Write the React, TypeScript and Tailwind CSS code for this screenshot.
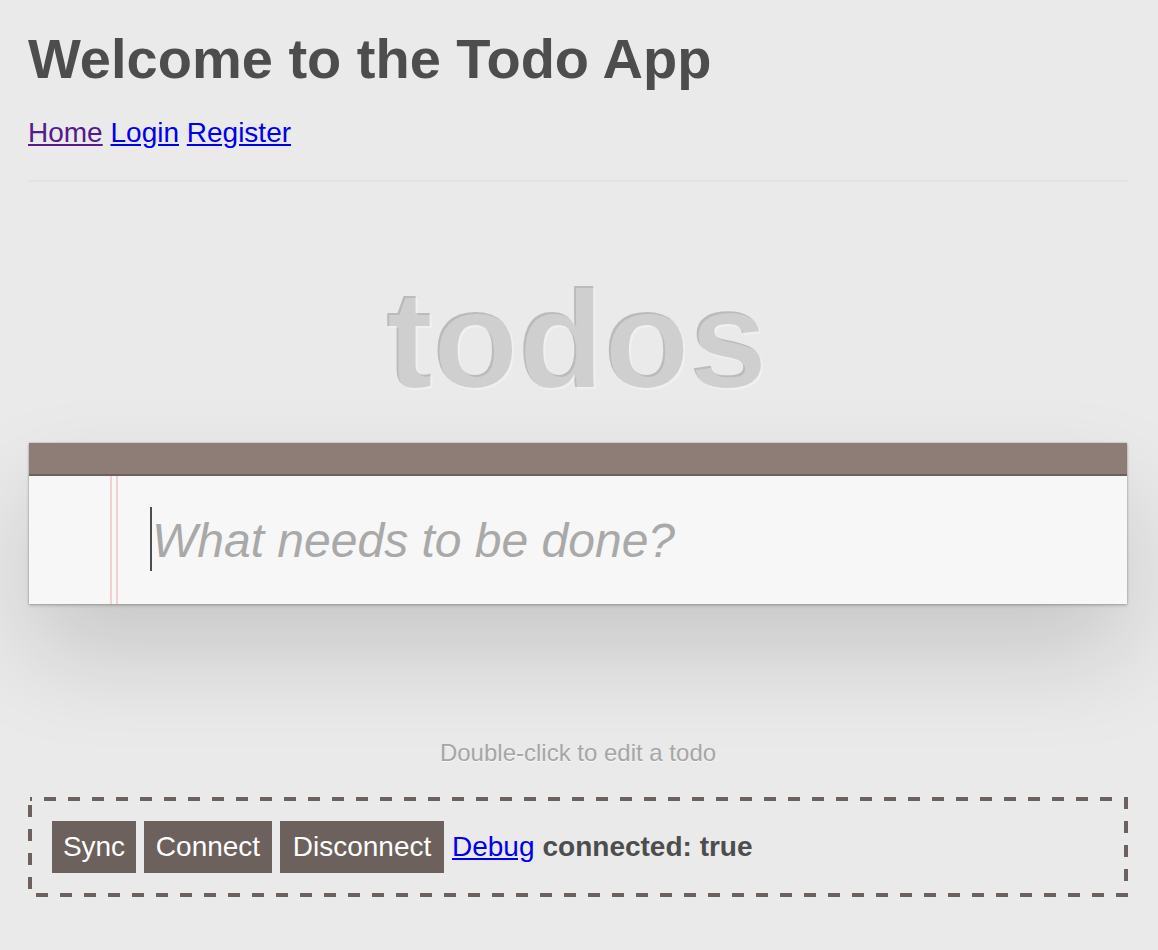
import React from "react";

export default function App() {
  return (
    <div className="min-h-[950px] bg-[#eaeaea] font-['Liberation_Sans',Arial,sans-serif] text-[#4d4d4d] pl-[28px] pt-[27px]">
      <div className="w-[1100px]">
        <h1 className="m-0 text-[56px] leading-[64px] font-bold">Welcome to the Todo App</h1>
        <nav className="mt-[26px] text-[28px] leading-[32px]">
          <a href="#" className="text-[#551a8b] underline">Home</a>{" "}
          <a href="#" className="text-[#0000ee] underline">Login</a>{" "}
          <a href="#" className="text-[#0000ee] underline">Register</a>
        </nav>
        <div className="mt-[31px] h-[2px] bg-[#e3e3e3]" />

        <div
          className="mt-[89px] text-center text-[140px] leading-[140px] font-bold text-[rgba(255,255,255,0.3)]"
          style={{ textShadow: "-2px -2px rgba(0,0,0,0.2)" }}
        >
          todos
        </div>

        <section className="mt-[32px] ml-[1px] w-[1098px] bg-[#f7f7f7] shadow-[0_0_2px_rgba(0,0,0,0.3),0_2px_3px_rgba(0,0,0,0.15),0_50px_100px_rgba(0,0,0,0.15)]">
          <div className="h-[33px] bg-[#8d7d76] border-b-2 border-[#6c615c]" />
          <div className="relative h-[128px]">
            <div className="absolute left-[81px] top-0 h-full w-[8px] border-l-2 border-r-2 border-[#f1d0d0]" />
            <div className="absolute left-[121px] top-[31px] h-[64px] w-[2px] bg-[#4d4d4d]" />
            <input
              className="block h-[128px] w-full bg-transparent pl-[123px] pr-8 text-[48px] outline-none border-0 text-[#4d4d4d] placeholder:text-[#a9a9a9] placeholder:italic"
              placeholder="What needs to be done?"
            />
          </div>
        </section>

        <p
          className="mt-[135px] text-center text-[24px] leading-[28px] text-[#a6a6a6]"
          style={{ textShadow: "0 1px rgba(255,255,255,0.7)" }}
        >
          Double-click to edit a todo
        </p>

        <div className="relative mt-[30px] h-[100px] p-[4px] pl-[24px] flex items-center gap-[8px] text-[28px] leading-[32px]">
          <svg className="pointer-events-none absolute inset-0" width="1100" height="100" viewBox="0 0 1100 100">
            <rect
              x="2"
              y="2"
              width="1096"
              height="96"
              fill="none"
              stroke="#6c615c"
              strokeWidth="4"
              strokeDasharray="12 12"
              strokeDashoffset="10"
            />
          </svg>
          <button className="h-[52px] w-[84px] bg-[#6c615c] text-white">Sync</button>
          <button className="h-[52px] w-[128px] bg-[#6c615c] text-white">Connect</button>
          <button className="h-[52px] w-[164px] bg-[#6c615c] text-white">Disconnect</button>
          <a href="#" className="text-[#0000ee] underline">Debug</a>
          <span className="font-bold">connected: true</span>
        </div>
      </div>
    </div>
  );
}
